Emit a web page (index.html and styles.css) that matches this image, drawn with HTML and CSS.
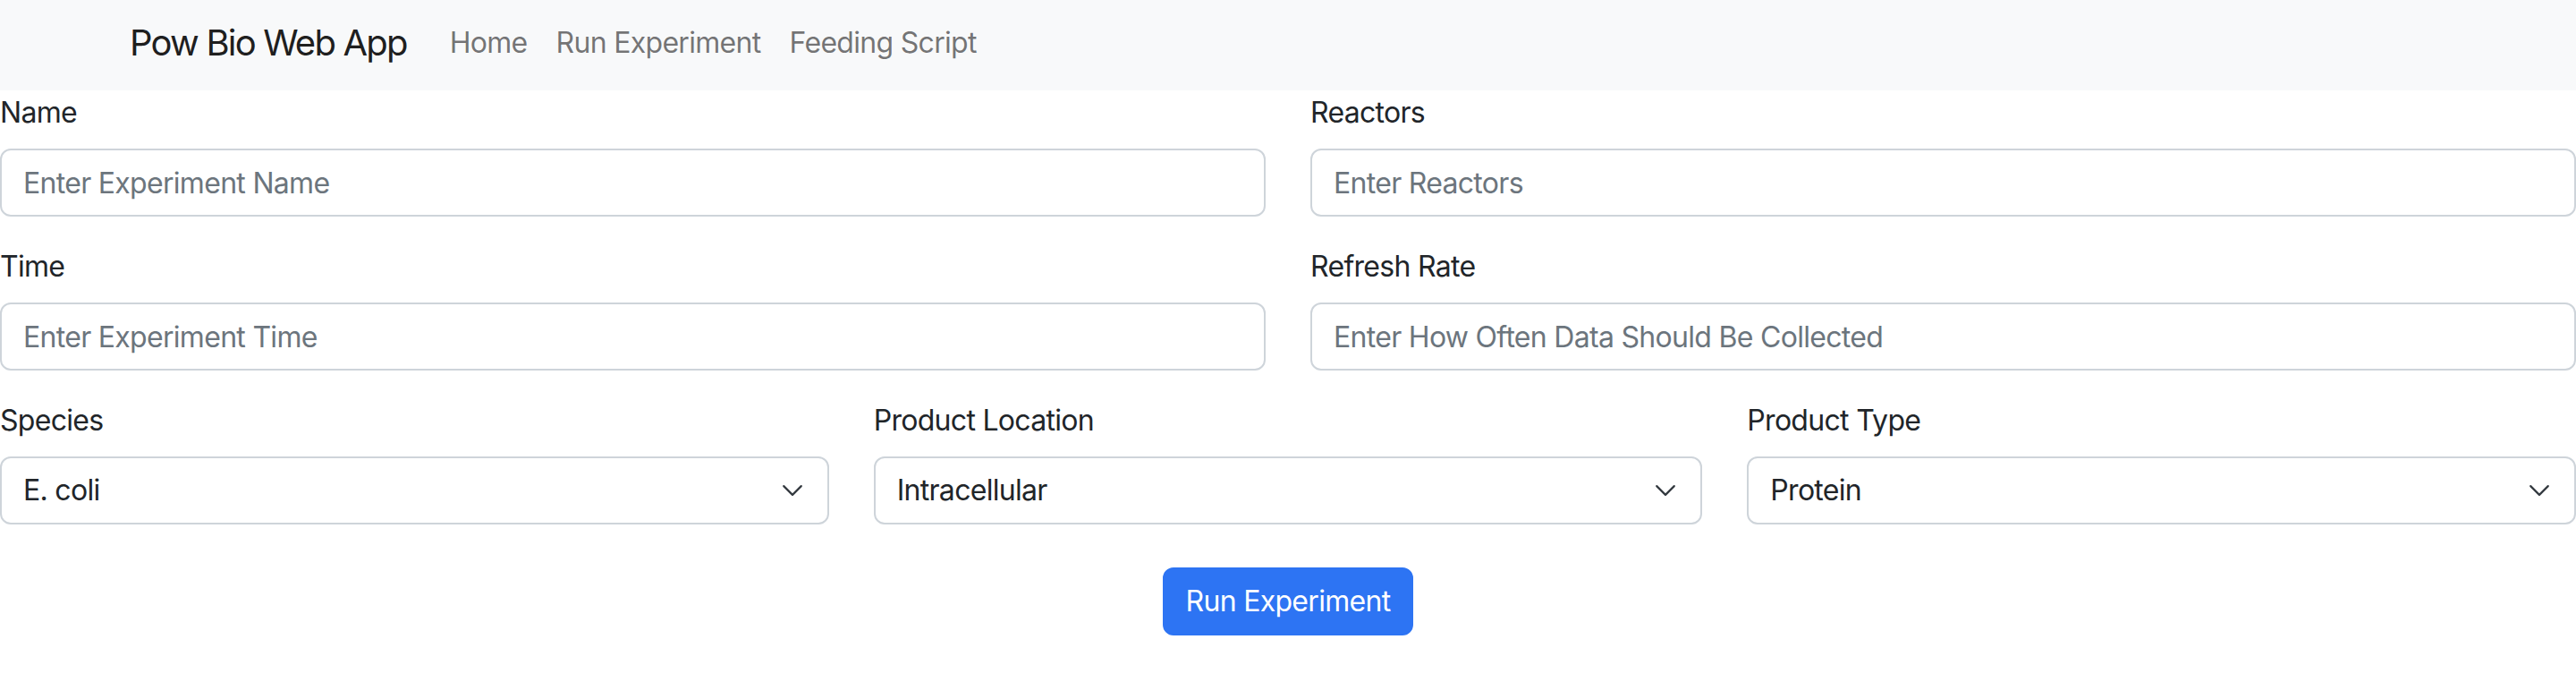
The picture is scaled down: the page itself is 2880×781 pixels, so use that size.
FILE: index.html
```html
<!DOCTYPE html>
<html lang="en">
<head>
<meta charset="utf-8">
<title>Pow Bio Web App</title>
<link rel="stylesheet" href="styles.css">
</head>
<body>
<nav class="navbar">
  <a class="brand" href="#">Pow Bio Web App</a>
  <ul class="nav">
    <li><a class="nav-link" href="#">Home</a></li>
    <li><a class="nav-link" href="#">Run Experiment</a></li>
    <li><a class="nav-link" href="#">Feeding Script</a></li>
  </ul>
</nav>
<form class="form">
  <div class="row row-2">
    <div class="field">
      <label class="label" for="name">Name</label>
      <input class="control" id="name" type="text" placeholder="Enter Experiment Name">
    </div>
    <div class="field">
      <label class="label" for="reactors">Reactors</label>
      <input class="control" id="reactors" type="text" placeholder="Enter Reactors">
    </div>
  </div>
  <div class="row row-2">
    <div class="field">
      <label class="label" for="time">Time</label>
      <input class="control" id="time" type="text" placeholder="Enter Experiment Time">
    </div>
    <div class="field">
      <label class="label" for="rate">Refresh Rate</label>
      <input class="control" id="rate" type="text" placeholder="Enter How Often Data Should Be Collected">
    </div>
  </div>
  <div class="row row-3">
    <div class="field">
      <label class="label" for="species">Species</label>
      <div class="select-wrap">
        <select class="control select" id="species"><option>E. coli</option></select>
        <svg class="chevron" viewBox="0 0 16 16"><path d="m2 5 6 6 6-6"/></svg>
      </div>
    </div>
    <div class="field">
      <label class="label" for="location">Product Location</label>
      <div class="select-wrap">
        <select class="control select" id="location"><option>Intracellular</option></select>
        <svg class="chevron" viewBox="0 0 16 16"><path d="m2 5 6 6 6-6"/></svg>
      </div>
    </div>
    <div class="field">
      <label class="label" for="ptype">Product Type</label>
      <div class="select-wrap">
        <select class="control select" id="ptype"><option>Protein</option></select>
        <svg class="chevron" viewBox="0 0 16 16"><path d="m2 5 6 6 6-6"/></svg>
      </div>
    </div>
  </div>
  <div class="actions">
    <button class="btn" type="button">Run Experiment</button>
  </div>
</form>
</body>
</html>
```
FILE: styles.css
```css
* { box-sizing: border-box; }
html, body { margin: 0; padding: 0; }
body {
  font-family: Inter, "Liberation Sans", sans-serif;
  font-size: 32px;
  line-height: 48px;
  letter-spacing: -0.7px;
  color: #212529;
  background: #fff;
  width: 2880px;
  height: 781px;
  overflow: hidden;
}
.navbar {
  height: 101px;
  background: #f8f9fa;
  display: flex;
  align-items: center;
  padding-left: 145px;
  padding-bottom: 6px;
}
.brand {
  font-size: 40px;
  line-height: 60px;
  letter-spacing: -1.8px;
  color: rgba(0,0,0,.9);
  text-decoration: none;
  margin-right: 32px;
}
.nav {
  display: flex;
  list-style: none;
  margin: 0;
  padding: 0;
}
.nav-link {
  display: block;
  padding: 16px 16px;
  color: rgba(0,0,0,.55);
  text-decoration: none;
}
.form { margin: 0; padding-top: 1px; }
.row {
  display: grid;
  column-gap: 50px;
  margin-bottom: 32px;
}
.row-2 { grid-template-columns: 1fr 1fr; }
.row-3 { grid-template-columns: 1fr 1fr 1fr; }
.field { min-width: 0; }
.label {
  display: block;
  margin-bottom: 16px;
}
.control {
  display: block;
  width: 100%;
  height: 76px;
  padding: 12px 24px;
  font: inherit;
  letter-spacing: inherit;
  color: #212529;
  background: #fff;
  border: 2px solid #ced4da;
  border-radius: 12px;
  outline: none;
}
.control::placeholder { color: #6c757d; opacity: 1; }
.select-wrap { position: relative; }
.select {
  appearance: none;
  -webkit-appearance: none;
  padding-right: 72px;
}
.chevron {
  position: absolute;
  right: 28px;
  top: 25px;
  width: 26px;
  height: 26px;
  fill: none;
  stroke: #343a40;
  stroke-width: 1.4;
  stroke-linecap: round;
  stroke-linejoin: round;
  pointer-events: none;
}
.actions {
  display: flex;
  justify-content: center;
  padding-top: 16px;
}
.btn {
  font: inherit;
  letter-spacing: inherit;
  white-space: nowrap;
  color: #fff;
  background: #2d74f3;
  border: 2px solid #2d74f3;
  border-radius: 12px;
  height: 76px;
  padding: 12px 24px;
}
```
